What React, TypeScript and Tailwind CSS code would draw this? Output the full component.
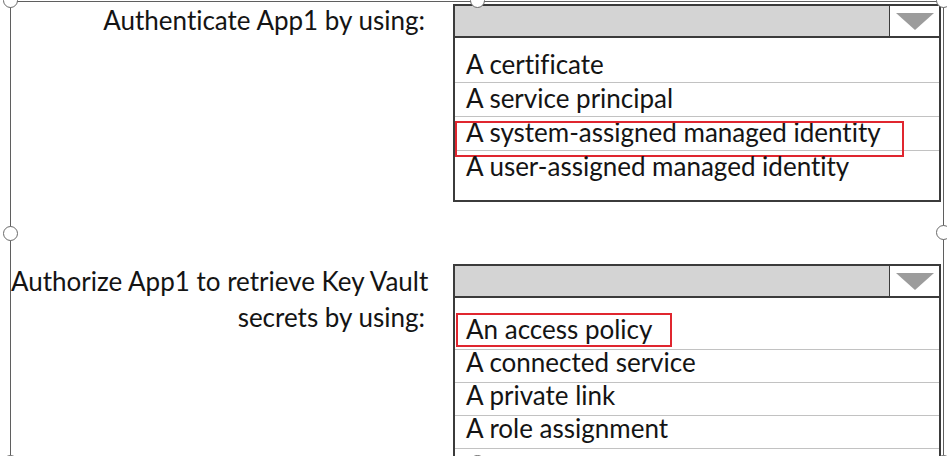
import React from 'react'

interface Option {
  label: string
  marked?: boolean
}

const authOptions: Option[] = [
  { label: 'A certificate' },
  { label: 'A service principal' },
  { label: 'A system-assigned managed identity', marked: true },
  { label: 'A user-assigned managed identity' },
]

const accessOptions: Option[] = [
  { label: 'An access policy', marked: true },
  { label: 'A connected service' },
  { label: 'A private link' },
  { label: 'A role assignment' },
]

const Header: React.FC = () => (
  <div className="flex h-[32px] border-b-2 border-[#3b3b3b] bg-[#d4d4d4]">
    <div className="flex-1" />
    <div className="flex w-[50px] items-center justify-center border-l border-[#3b3b3b] bg-white">
      <svg width="38" height="17" viewBox="0 0 38 17">
        <polygon points="0,0 38,0 19,17" fill="#9c9c9c" />
      </svg>
    </div>
  </div>
)

const Handle: React.FC<{ className: string }> = ({ className }) => (
  <div className={`absolute h-[15px] w-[15px] rounded-full border-[1.5px] border-[#6a6a6a] bg-white ${className}`} />
)

export default function App() {
  return (
    <div className="relative h-[456px] w-[947px] overflow-hidden bg-white font-['Lato',sans-serif] text-[26px] text-[#141414] [font-variant-ligatures:none]">
      {/* selection frame */}
      <div className="ml-[10px] mt-px h-[480px] w-[934px] border-x border-t border-[#5f5f5f] pt-[2px]">
        {/* question 1 */}
        <div className="flex">
          <div className="-mt-[2px] w-[442px] whitespace-nowrap pr-[28px] text-right leading-[36px]">
            Authenticate App1 by using:
          </div>
          <div className="w-[488px] border-2 border-[#3b3b3b]">
            <Header />
            <div className="pb-[15px] pt-[11px]">
              {authOptions.map((opt, i) => (
                <div
                  key={opt.label}
                  className={`relative h-[34px] pl-[11px] leading-[31px] ${i < 3 ? 'border-b border-[#c2c2c2]' : ''}`}
                >
                  {opt.label}
                  {opt.marked && (
                    <div className="absolute left-0 top-[4px] h-[36px] w-[449px] border-2 border-[#e0262f]" />
                  )}
                </div>
              ))}
            </div>
          </div>
        </div>

        {/* question 2 */}
        <div className="mt-[62px] flex">
          <div className="-mt-[1px] w-[442px] whitespace-nowrap pr-[28px] text-right leading-[36px]">
            Authorize App1 to retrieve Key Vault
            <br />
            secrets by using:
          </div>
          <div className="w-[488px] border-2 border-[#3b3b3b]">
            <Header />
            <div className="pb-[30px] pt-[19px]">
              {accessOptions.map(opt => (
                <div
                  key={opt.label}
                  className="relative h-[33px] border-b border-[#c2c2c2] pl-[11px] leading-[24px]"
                >
                  {opt.label}
                  {opt.marked && (
                    <div className="absolute left-px top-[-4px] h-[34px] w-[216px] border-2 border-[#e0262f]" />
                  )}
                </div>
              ))}
            </div>
          </div>
        </div>
      </div>

      {/* sizing handles */}
      <Handle className="left-[3px] top-[-7px]" />
      <Handle className="left-[470px] top-[-7px]" />
      <Handle className="left-[936px] top-[-7px]" />
      <Handle className="left-[3px] top-[226px]" />
      <Handle className="left-[936px] top-[225px]" />
      <Handle className="left-[3px] top-[455px]" />
      <Handle className="left-[470px] top-[455px]" />
      <Handle className="left-[936px] top-[455px]" />
    </div>
  )
}
